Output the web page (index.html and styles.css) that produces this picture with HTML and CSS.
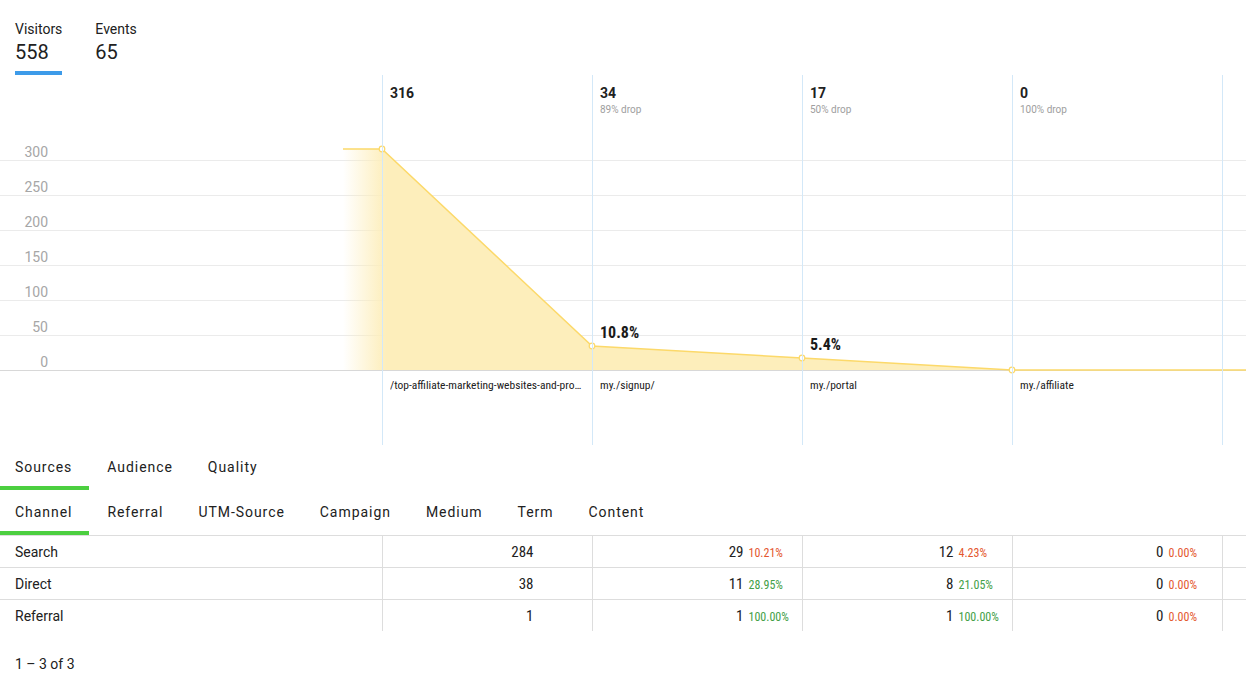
FILE: index.html
```html
<!DOCTYPE html>
<html lang="en">
<head>
  <meta charset="UTF-8">
  <meta name="viewport" content="width=device-width, initial-scale=1.0">
  <title>Funnel - Visitors</title>
  <link rel="stylesheet" href="styles.css">
</head>
<body>
  <div class="metric-tabs">
    <div class="metric active">
      <div class="metric-label">Visitors</div>
      <div class="metric-value">558</div>
    </div>
    <div class="metric">
      <div class="metric-label">Events</div>
      <div class="metric-value">65</div>
    </div>
  </div>

  <div class="funnel">
    <svg class="funnel-plot" width="1246" height="370" viewBox="0 0 1246 370">
      <defs>
        <linearGradient id="fade" gradientUnits="userSpaceOnUse" x1="343" y1="0" x2="386" y2="0">
          <stop offset="0" stop-color="#fdeebb" stop-opacity="0"/>
          <stop offset="1" stop-color="#fdeebb" stop-opacity="1"/>
        </linearGradient>
      </defs>
      <!-- grid -->
      <g stroke="#ebebeb" stroke-width="1">
        <line x1="0" y1="85.5" x2="1246" y2="85.5"/>
        <line x1="0" y1="120.5" x2="1246" y2="120.5"/>
        <line x1="0" y1="155.5" x2="1246" y2="155.5"/>
        <line x1="0" y1="190.5" x2="1246" y2="190.5"/>
        <line x1="0" y1="225.5" x2="1246" y2="225.5"/>
        <line x1="0" y1="260.5" x2="1246" y2="260.5"/>
      </g>
      <line x1="0" y1="295.5" x2="1246" y2="295.5" stroke="#d8d8d8" stroke-width="1"/>
      <g class="axis-label" text-anchor="end">
        <text x="48" y="82">300</text>
        <text x="48" y="117">250</text>
        <text x="48" y="152">200</text>
        <text x="48" y="187">150</text>
        <text x="48" y="222">100</text>
        <text x="48" y="257">50</text>
        <text x="48" y="292">0</text>
      </g>
      <!-- area -->
      <polygon points="343,74 382,74 592,271 802,283 1012,295 1246,295 343,295" fill="url(#fade)"/>
      <polyline points="343,74 382,74 592,271 802,283 1012,295 1246,295" fill="none" stroke="#fcd96a" stroke-width="1.5"/>
      <g fill="#fff" stroke="#fcd96a" stroke-width="1.2">
        <circle cx="382" cy="74" r="2.8"/>
        <circle cx="592" cy="271" r="2.8"/>
        <circle cx="802" cy="283" r="2.8"/>
        <circle cx="1012" cy="295" r="2.8"/>
      </g>
      <g class="rate-label">
        <text x="600" y="263">10.8%</text>
        <text x="810" y="275">5.4%</text>
      </g>
    </svg>

    <div class="funnel-cols">
      <div class="funnel-col">
        <div class="step-count">316</div>
        <div class="step-label cond">/top-affiliate-marketing-websites-and-pro…</div>
      </div>
      <div class="funnel-col">
        <div class="step-count">34</div>
        <div class="step-drop">89% drop</div>
        <div class="step-label cond">my./signup/</div>
      </div>
      <div class="funnel-col">
        <div class="step-count">17</div>
        <div class="step-drop">50% drop</div>
        <div class="step-label cond">my./portal</div>
      </div>
      <div class="funnel-col last">
        <div class="step-count">0</div>
        <div class="step-drop">100% drop</div>
        <div class="step-label cond">my./affiliate</div>
      </div>
    </div>
  </div>

  <div class="tabs">
    <div class="tab active">Sources</div>
    <div class="tab">Audience</div>
    <div class="tab">Quality</div>
  </div>
  <div class="tabs">
    <div class="tab active">Channel</div>
    <div class="tab">Referral</div>
    <div class="tab">UTM-Source</div>
    <div class="tab">Campaign</div>
    <div class="tab">Medium</div>
    <div class="tab">Term</div>
    <div class="tab">Content</div>
  </div>

  <table class="sources-table">
    <colgroup>
      <col class="col-name">
      <col class="col-num">
      <col class="col-num">
      <col class="col-num">
      <col class="col-num">
      <col>
    </colgroup>
    <tbody>
      <tr>
        <td class="name">Search</td>
        <td class="num"><span class="cond">284</span><span class="pct"></span></td>
        <td class="num"><span class="cond">29</span><span class="pct bad">10.21%</span></td>
        <td class="num"><span class="cond">12</span><span class="pct bad">4.23%</span></td>
        <td class="num"><span class="cond">0</span><span class="pct bad">0.00%</span></td>
        <td class="tail"></td>
      </tr>
      <tr>
        <td class="name">Direct</td>
        <td class="num"><span class="cond">38</span><span class="pct"></span></td>
        <td class="num"><span class="cond">11</span><span class="pct good">28.95%</span></td>
        <td class="num"><span class="cond">8</span><span class="pct good">21.05%</span></td>
        <td class="num"><span class="cond">0</span><span class="pct bad">0.00%</span></td>
        <td class="tail"></td>
      </tr>
      <tr>
        <td class="name">Referral</td>
        <td class="num"><span class="cond">1</span><span class="pct"></span></td>
        <td class="num"><span class="cond">1</span><span class="pct good">100.00%</span></td>
        <td class="num"><span class="cond">1</span><span class="pct good">100.00%</span></td>
        <td class="num"><span class="cond">0</span><span class="pct bad">0.00%</span></td>
        <td class="tail"></td>
      </tr>
    </tbody>
  </table>

  <div class="pager">1 – 3 of 3</div>
</body>
</html>
```

FILE: styles.css
```css
body {
  margin: 0;
  font-family: Roboto, "Liberation Sans", sans-serif;
  font-size: 14px;
  color: #212121;
  background: #fff;
  width: 1246px;
}

.cond {
  font-family: "Roboto Condensed", "Liberation Sans Narrow", Roboto, sans-serif;
}

/* top metric switch */
.metric-tabs {
  display: flex;
  gap: 33px;
  padding: 21px 0 0 15px;
  height: 75px;
  box-sizing: border-box;
}

.metric {
  padding-bottom: 7px;
  border-bottom: 4px solid transparent;
}

.metric.active {
  border-bottom-color: #3d9be9;
}

.metric-label {
  line-height: 16px;
}

.metric-value {
  margin-top: 3px;
  font-size: 20px;
  line-height: 24px;
}

/* funnel chart */
.funnel {
  position: relative;
  height: 370px;
}

.funnel-plot {
  position: absolute;
  top: 0;
  left: 0;
}

.axis-label {
  font-family: Roboto, sans-serif;
  font-size: 14px;
  fill: #a6a6a6;
}

.rate-label {
  font-family: "Roboto Condensed", Roboto, sans-serif;
  font-size: 16px;
  font-weight: 700;
  fill: #1a1a1a;
}

.funnel-cols {
  position: relative;
  display: flex;
  height: 100%;
  margin-left: 382px;
}

.funnel-col {
  width: 210px;
  box-sizing: border-box;
  border-left: 1px solid #d3e8f8;
  padding: 10px 8px 0 7px;
  display: flex;
  flex-direction: column;
}

.funnel-col.last {
  width: 211px;
  border-right: 1px solid #d3e8f8;
}

.step-count {
  font-weight: 700;
  line-height: 16px;
}

.step-drop {
  margin-top: 3px;
  font-size: 10px;
  line-height: 12px;
  color: #9e9e9e;
}

.step-label {
  margin-top: auto;
  margin-bottom: 53px;
  font-size: 11.5px;
  line-height: 14px;
  white-space: nowrap;
  overflow: hidden;
}

/* tabs */
.tabs {
  display: flex;
}

.tab {
  height: 45px;
  box-sizing: border-box;
  padding: 14px 17px 0 15px;
  margin-right: 3px;
  line-height: 16px;
  letter-spacing: 0.95px;
  border-bottom: 4px solid transparent;
  cursor: pointer;
}

.tab.active {
  border-bottom-color: #4ccf40;
}

/* table */
.sources-table {
  width: 1246px;
  border-collapse: collapse;
  table-layout: fixed;
  border-top: 1px solid #dddddd;
}

.col-name {
  width: 382px;
}

.col-num {
  width: 210px;
}

.sources-table td {
  height: 31px;
  padding: 0;
  border-bottom: 1px solid #dddddd;
}

.sources-table tr:last-child td {
  border-bottom: none;
}

.sources-table .name {
  padding-left: 15px;
}

.sources-table .num {
  padding-right: 8px;
  text-align: right;
  font-size: 15px;
  border-left: 1px solid #dddddd;
}

.sources-table .tail {
  border-left: 1px solid #dddddd;
}

.pct {
  display: inline-block;
  width: 45px;
  margin-left: 5px;
  text-align: left;
  font-family: "Roboto Condensed", Roboto, sans-serif;
  font-size: 12px;
}

.pct.bad {
  color: #e4572e;
}

.pct.good {
  color: #43a047;
}

.pager {
  margin-top: 25px;
  padding-left: 15px;
  line-height: 16px;
}
```
